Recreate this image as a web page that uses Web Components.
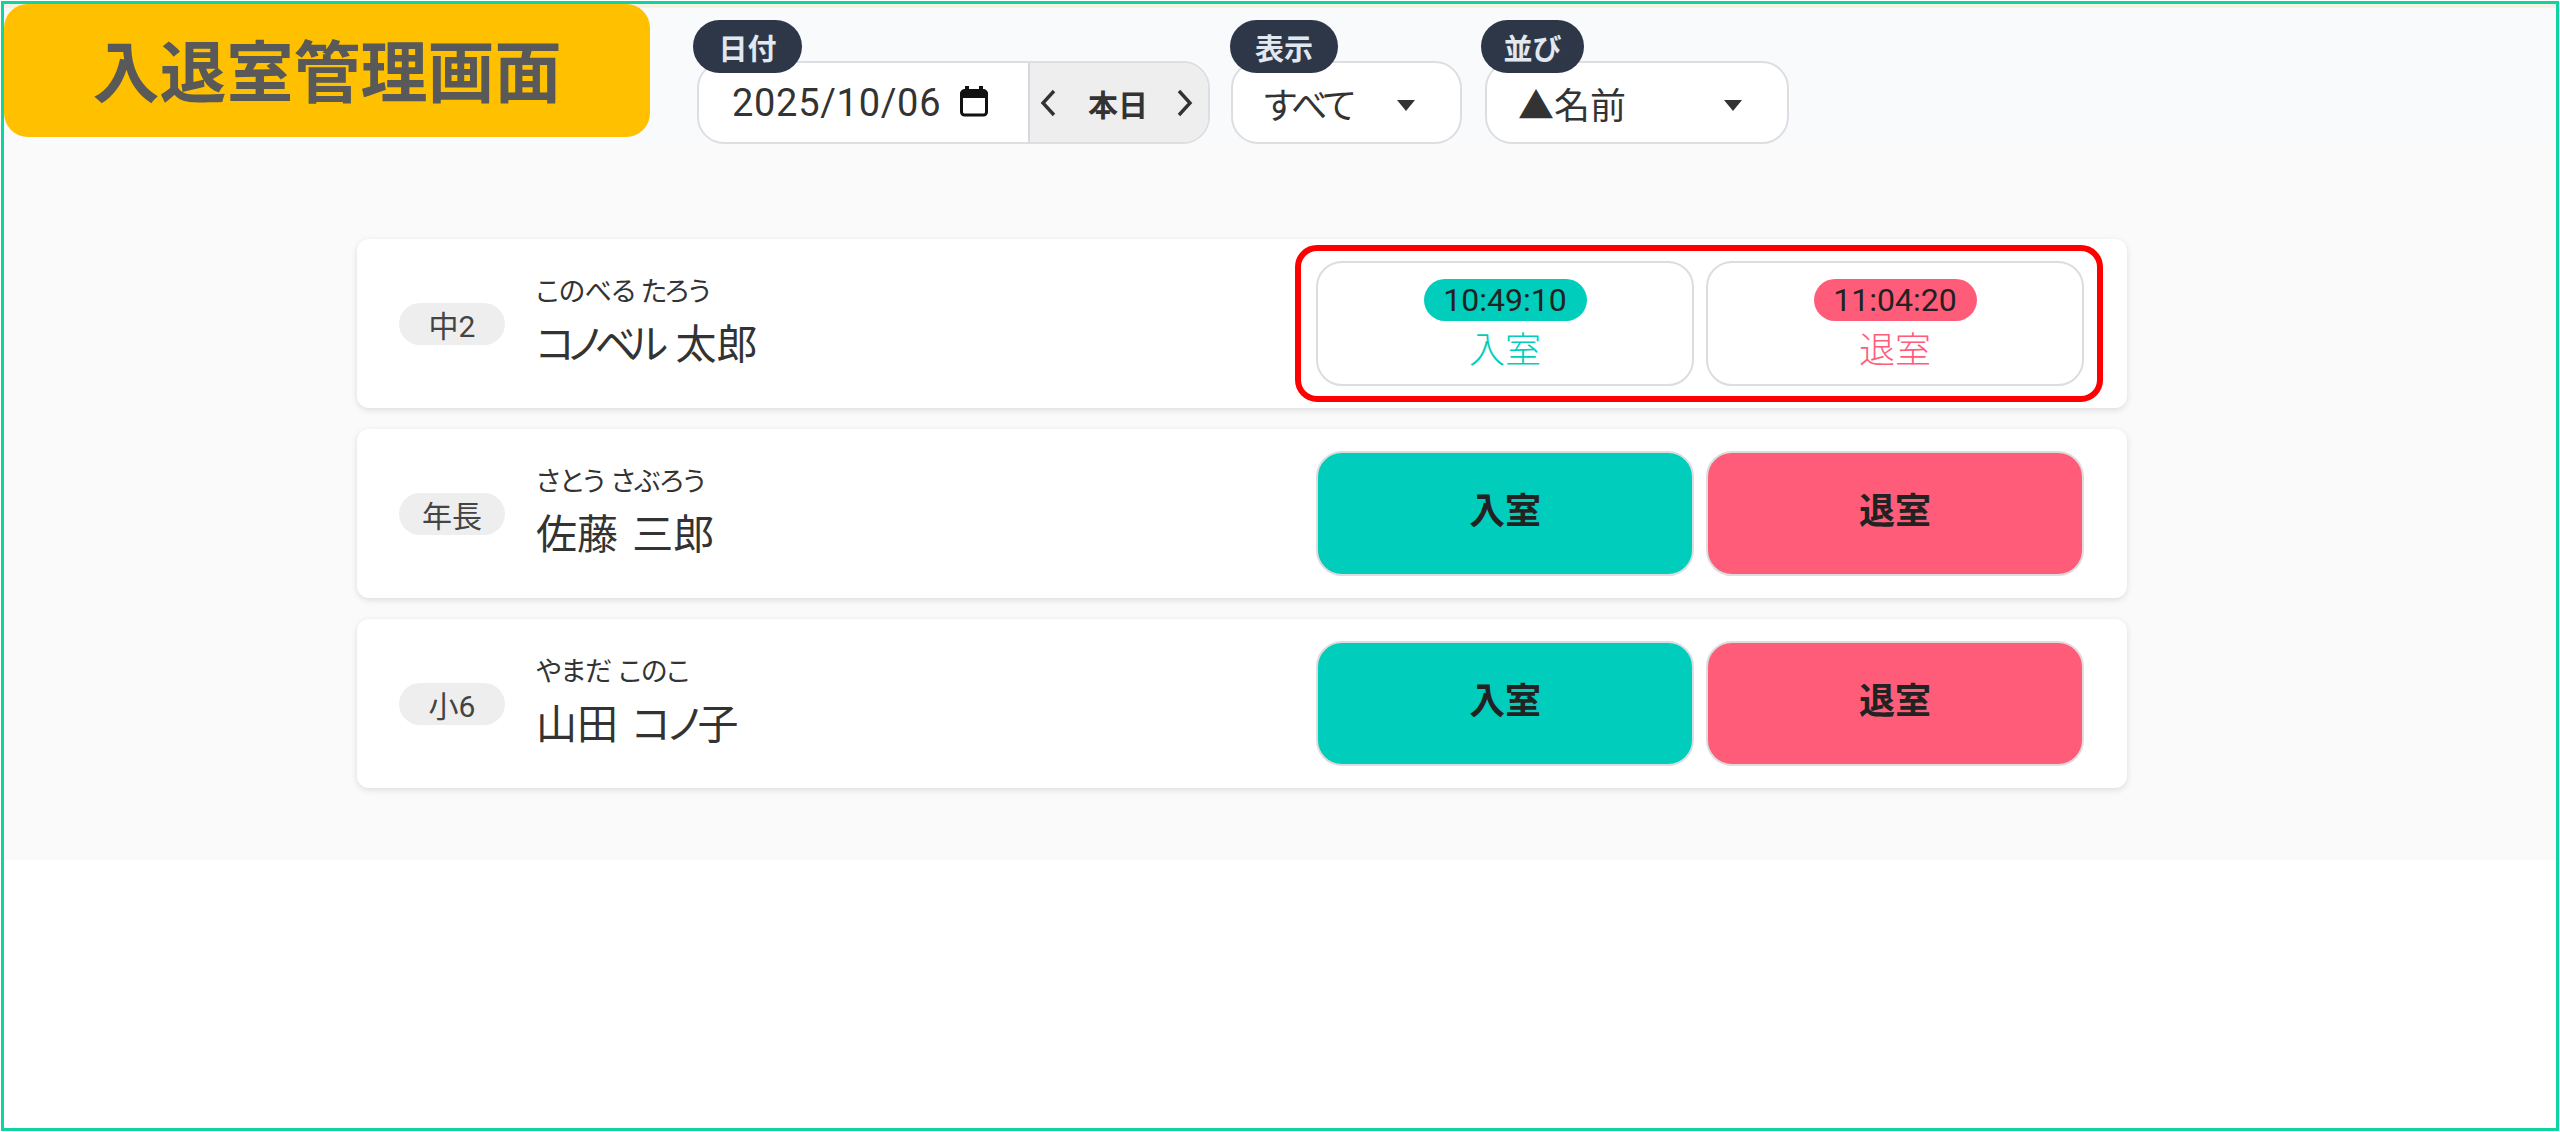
<!DOCTYPE html>
<html lang="ja">
<head>
<meta charset="utf-8">
<title>入退室管理画面</title>
<style>
    html, body {
        margin: 0;
        height: 100%;
        background: #fff;
        font-family: Roboto, "Noto Sans CJK JP", sans-serif;
        color: #333;
    }
    .narrow { letter-spacing: -6.5px; }
    .narrow.short { letter-spacing: -3px; }
</style>
</head>
<body>
<attendance-app>
    <page-header slot="header">
        <filter-field label="日付" style="--pill-x: -4px; --pill-w: 109px;">
            <date-control value="2025/10/06" today="本日"></date-control>
        </filter-field>
        <filter-field label="表示" style="--pill-x: -1px; --pill-w: 108px; margin-left: 21px;">
            <select-control style="width: 231px; letter-spacing: -3.3px;">すべて</select-control>
        </filter-field>
        <filter-field label="並び" style="--pill-x: -4px; --pill-w: 103px; margin-left: 23px;">
            <select-control style="width: 304px;">▲名前</select-control>
        </filter-field>
    </page-header>

    <student-card grade="中2" kana="このべる たろう" highlight>
        <span slot="name"><span class="narrow">コノベル</span> 太郎</span>
        <action-button kind="in" time="10:49:10">入室</action-button>
        <action-button kind="out" time="11:04:20">退室</action-button>
    </student-card>
    <student-card grade="年長" kana="さとう さぶろう">
        <span slot="name">佐藤 三郎</span>
        <action-button kind="in">入室</action-button>
        <action-button kind="out">退室</action-button>
    </student-card>
    <student-card grade="小6" kana="やまだ このこ">
        <span slot="name">山田 <span class="narrow short">コノ</span>子</span>
        <action-button kind="in">入室</action-button>
        <action-button kind="out">退室</action-button>
    </student-card>
</attendance-app>

<script>
class AttendanceApp extends HTMLElement {
    constructor() {
        super();
        this.attachShadow({ mode: 'open' });
        this.shadowRoot.innerHTML = `
            <style>
                :host {
                    display: block;
                    box-sizing: border-box;
                    height: calc(100vh - 2px);
                    margin: 1px;
                    border: 3px solid #0fd3a1;
                    overflow: hidden;
                }
                .main {
                    height: 856px;
                    background: #fafafa;
                }
                .list {
                    display: flex;
                    flex-direction: column;
                    gap: 21px;
                    width: 1770px;
                    margin: 95px 0 0 353px;
                }
            </style>
            <div class="main">
                <slot name="header"></slot>
                <div class="list"><slot></slot></div>
            </div>
        `;
    }
}

class PageHeader extends HTMLElement {
    constructor() {
        super();
        this.attachShadow({ mode: 'open' });
        this.shadowRoot.innerHTML = `
            <style>
                :host {
                    display: flex;
                    align-items: flex-start;
                    background: linear-gradient(#f7f1e3 4px, #f9fafb 4px);
                }
                .title {
                    display: flex;
                    align-items: center;
                    justify-content: center;
                    box-sizing: border-box;
                    flex: 0 0 646px;
                    height: 133px;
                    padding-bottom: 6px;
                    background: #ffc000;
                    border-radius: 24px;
                    color: #595959;
                    font-size: 67px;
                    font-weight: 700;
                }
                .filters {
                    display: flex;
                    align-items: flex-start;
                    margin: 16px 0 0 47px;
                }
            </style>
            <div class="title">入退室管理画面</div>
            <div class="filters"><slot></slot></div>
        `;
    }
}

class FilterField extends HTMLElement {
    constructor() {
        super();
        this.attachShadow({ mode: 'open' });
        this.shadowRoot.innerHTML = `
            <style>
                :host {
                    display: flex;
                    flex-direction: column;
                    align-items: flex-start;
                }
                .pill {
                    position: relative;
                    z-index: 1;
                    display: flex;
                    align-items: center;
                    justify-content: center;
                    width: var(--pill-w, 108px);
                    height: 53px;
                    margin: 0 0 -12px var(--pill-x, 0);
                    border-radius: 27px;
                    background: #2d3748;
                    color: #e2e8f0;
                    font-size: 29px;
                    font-weight: 700;
                }
            </style>
            <div class="pill"></div>
            <slot></slot>
        `;
        this.shadowRoot.querySelector('.pill').textContent = this.getAttribute('label');
    }
}

class DateControl extends HTMLElement {
    constructor() {
        super();
        this.attachShadow({ mode: 'open' });
        this.shadowRoot.innerHTML = `
            <style>
                :host {
                    display: flex;
                    box-sizing: border-box;
                    width: 513px;
                    height: 83px;
                    border: 2px solid #dcdee2;
                    border-radius: 27px;
                    background: #fff;
                    overflow: hidden;
                }
                .date {
                    display: flex;
                    align-items: center;
                    box-sizing: border-box;
                    flex: 0 0 331px;
                    padding-left: 33px;
                    border-right: 2px solid #d5d8de;
                    font-size: 38px;
                    letter-spacing: 0.7px;
                    color: #333;
                }
                .date svg { margin: 0 0 3px 17px; }
                .nav {
                    flex: 1;
                    display: flex;
                    align-items: center;
                    background: #eeeeee;
                    padding-left: 9px;
                    font-size: 30px;
                    font-weight: 700;
                    color: #333;
                }
                .today { margin: 0 28px 0 31px; }
            </style>
            <div class="date">
                <span class="value"></span>
                <svg width="32" height="32" viewBox="0 0 32 32">
                    <path d="M7 1h4v4H7zM21 1h4v4h-4z" fill="#111"/>
                    <path d="M2 9a5 5 0 0 1 5-5h18a5 5 0 0 1 5 5v4H2z" fill="#111"/>
                    <rect x="3.5" y="6" width="25" height="24" rx="3" fill="none" stroke="#111" stroke-width="3"/>
                </svg>
            </div>
            <div class="nav">
                <svg width="18" height="28" viewBox="0 0 18 28"><path d="M15 2 4 14l11 12" fill="none" stroke="#333" stroke-width="3.4"/></svg>
                <span class="today"></span>
                <svg width="18" height="28" viewBox="0 0 18 28"><path d="M3 2l11 12L3 26" fill="none" stroke="#333" stroke-width="3.4"/></svg>
            </div>
        `;
        this.shadowRoot.querySelector('.value').textContent = this.getAttribute('value');
        this.shadowRoot.querySelector('.today').textContent = this.getAttribute('today');
    }
}

class SelectControl extends HTMLElement {
    constructor() {
        super();
        this.attachShadow({ mode: 'open' });
        this.shadowRoot.innerHTML = `
            <style>
                :host {
                    display: flex;
                    align-items: center;
                    box-sizing: border-box;
                    height: 83px;
                    padding: 0 45px 0 31px;
                    border: 2px solid #dcdee2;
                    border-radius: 27px;
                    background: #fff;
                    font-size: 36px;
                    color: #333;
                    font-feature-settings: "palt";
                }
                svg { margin: 5px 0 0 auto; }
            </style>
            <slot></slot>
            <svg width="18" height="11" viewBox="0 0 18 11"><path d="M0 0h18L9 11z" fill="#333"/></svg>
        `;
    }
}

class StudentCard extends HTMLElement {
    constructor() {
        super();
        this.attachShadow({ mode: 'open' });
        this.shadowRoot.innerHTML = `
            <style>
                :host {
                    display: flex;
                    position: relative;
                    align-items: center;
                    box-sizing: border-box;
                    height: 169px;
                    padding: 0 43px 0 42px;
                    background: #fff;
                    border-radius: 12px;
                    box-shadow: 0 2px 6px rgba(0, 0, 0, 0.12);
                }
                .grade {
                    display: flex;
                    align-items: center;
                    justify-content: center;
                    flex: 0 0 106px;
                    height: 42px;
                    border-radius: 21px;
                    background: #eeeeee;
                    font-size: 30px;
                    color: #444;
                }
                .who {
                    flex: 1;
                    margin-left: 31px;
                    padding-bottom: 5px;
                    color: #333;
                    font-feature-settings: "palt";
                }
                .kana { font-size: 27px; line-height: 38px; letter-spacing: -0.5px; }
                .name { font-size: 41px; line-height: 50px; margin-top: 9px; word-spacing: 4px; }
                .actions {
                    display: flex;
                    gap: 12px;
                }
                .frame {
                    display: none;
                    position: absolute;
                    left: 938px;
                    top: 6px;
                    width: 808px;
                    height: 157px;
                    box-sizing: border-box;
                    border: 6px solid #ff0000;
                    border-radius: 22px;
                    pointer-events: none;
                }
                :host([highlight]) .frame { display: block; }
            </style>
            <div class="grade"></div>
            <div class="who">
                <div class="kana"></div>
                <div class="name"><slot name="name"></slot></div>
            </div>
            <div class="actions"><slot></slot></div>
            <div class="frame"></div>
        `;
        this.shadowRoot.querySelector('.grade').textContent = this.getAttribute('grade');
        this.shadowRoot.querySelector('.kana').textContent = this.getAttribute('kana');
    }
}

class ActionButton extends HTMLElement {
    constructor() {
        super();
        this.attachShadow({ mode: 'open' });
        this.shadowRoot.innerHTML = `
            <style>
                :host {
                    --accent: #00cdbb;
                    display: flex;
                    flex-direction: column;
                    align-items: center;
                    justify-content: center;
                    box-sizing: border-box;
                    width: 378px;
                    height: 125px;
                    padding-bottom: 4px;
                    border: 2px solid #dddddd;
                    border-radius: 26px;
                    background: var(--accent);
                    color: #222;
                    font-size: 36px;
                    font-weight: 700;
                    cursor: pointer;
                }
                :host([kind="out"]) { --accent: #ff5c7a; }
                :host([time]) {
                    padding: 4px 0 0;
                    background: #fff;
                    color: var(--accent);
                    font-weight: 300;
                }
                .time {
                    display: none;
                    align-items: center;
                    justify-content: center;
                    width: 163px;
                    height: 42px;
                    margin-bottom: 9px;
                    border-radius: 21px;
                    background: var(--accent);
                    color: #222;
                    font-size: 32px;
                    font-weight: 400;
                }
                :host([time]) .time { display: flex; }
                .label { line-height: 42px; }
            </style>
            <div class="time"></div>
            <div class="label"><slot></slot></div>
        `;
        this.shadowRoot.querySelector('.time').textContent = this.getAttribute('time') || '';
    }
}

window.customElements.define('attendance-app', AttendanceApp);
window.customElements.define('page-header', PageHeader);
window.customElements.define('filter-field', FilterField);
window.customElements.define('date-control', DateControl);
window.customElements.define('select-control', SelectControl);
window.customElements.define('student-card', StudentCard);
window.customElements.define('action-button', ActionButton);
</script>
</body>
</html>
